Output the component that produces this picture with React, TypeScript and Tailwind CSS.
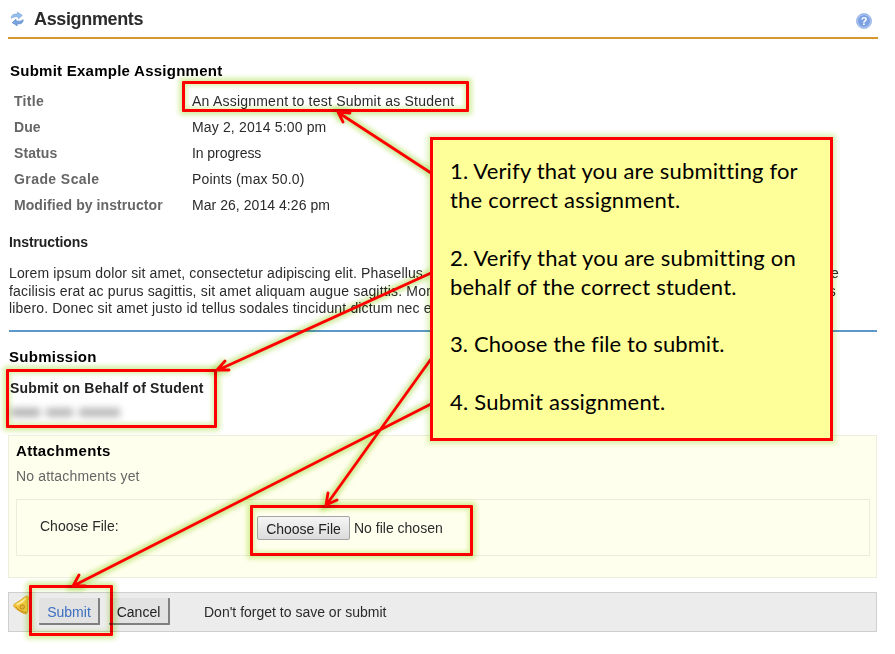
import type { ReactNode } from 'react';

const details: { label: string; value: string; labelClass: string; valueClass: string }[] = [
  { label: 'Title', value: 'An Assignment to test Submit as Student', labelClass: 'tracking-[0.3px]', valueClass: 'tracking-[0.22px]' },
  { label: 'Due', value: 'May 2, 2014 5:00 pm', labelClass: 'tracking-[0.1px]', valueClass: 'tracking-[0.15px]' },
  { label: 'Status', value: 'In progress', labelClass: 'tracking-[0.1px]', valueClass: 'tracking-[-0.07px]' },
  { label: 'Grade Scale', value: 'Points (max 50.0)', labelClass: 'tracking-[0.42px]', valueClass: 'tracking-[0.17px]' },
  { label: 'Modified by instructor', value: 'Mar 26, 2014 4:26 pm', labelClass: 'tracking-[0.08px]', valueClass: 'tracking-[0.05px]' },
];

function RefreshIcon() {
  return (
    <svg width="14" height="16" viewBox="0 0 14 16" className="shrink-0">
      <path d="M1.300 7.300C1.200 4 3.800 2.700 7.600 3.200L7.300 1.200 12.300 4.300 8.600 7.800 8.300 6C5.500 5.500 3.500 5.800 1.300 7.300z" fill="#93bfee" stroke="#6c9cd4" strokeWidth=".6" />
      <path d="M13.200 8.700c.1 3.300-2.500 4.600-6.300 4.100l.3 2L2.200 11.700 5.900 8.200 6.200 10c2.800.5 4.800.2 7-1.300z" fill="#78a5e0" stroke="#4f7fc2" strokeWidth=".6" />
    </svg>
  );
}

function HelpIcon() {
  return (
    <span className="flex h-[16px] w-[16px] items-center justify-center rounded-full border border-[#a3bdec] bg-[#7ba1e2] text-[11px] font-bold leading-none text-white shadow-[inset_0_0_0_1px_#b4c9f1]">
      ?
    </span>
  );
}

function BellIcon() {
  return (
    <svg width="18" height="20" viewBox="0 0 18 20" className="shrink-0">
      <path d="M.6 10.200C.8 8.800 5.500 6.900 8.500 4.500 10.500 2.900 12 1.700 13.600 1.300c1.400-.2 2.400.8 1.800 2.200-.9 2.300-.6 4.500-.5 7 .1 3.100.1 6.500-1.500 8.300-2.500.1-5.200-1.500-7.600-3.100C3.300 14 .5 11.800.6 10.200z" fill="#f5c93f" stroke="#d9a22c" strokeWidth="1" />
      <path d="M3.500 9.500c3.500-1 6.500-3.500 9-6" stroke="#fdeb9a" strokeWidth="1.800" fill="none" />
      <path d="M2.500 11.500c2.500 3 6.500 5.500 10.500 6" stroke="#c08a1c" strokeWidth="1" fill="none" />
      <circle cx="9.200" cy="12" r="2.200" fill="#eab838" stroke="#b07c14" strokeWidth=".8" />
    </svg>
  );
}

function Highlight({ className }: { className: string }) {
  return (
    <div
      className={
        'absolute rounded-[1px] border-3 border-[#ff0000] mix-blend-multiply shadow-[0_0_5px_3px_#d6efa3,inset_0_0_4px_2px_#dcf2b2] ' + className
      }
    />
  );
}

function Arrows() {
  const d =
    'M431 173L339 113M343 122L338 112L350 113M431 273L218 370M225 361L217 370L229 370M431 359L327 504M328 493L326 505L337 500M431 404L75 585M79 575L73 586L85 586';
  return (
    <>
      <svg className="absolute inset-0 mix-blend-multiply" width="895" height="654" viewBox="0 0 895 654" fill="none">
        <defs>
          <filter id="glow" x="0" y="0" width="895" height="654" filterUnits="userSpaceOnUse">
            <feGaussianBlur stdDeviation="2" />
          </filter>
        </defs>
        <path d={d} stroke="#b9e26c" strokeOpacity=".65" strokeWidth="9" filter="url(#glow)" />
      </svg>
      <svg className="absolute inset-0" width="895" height="654" viewBox="0 0 895 654" fill="none">
        <path d={d} stroke="#ff0000" strokeWidth="2.800" strokeLinecap="round" strokeLinejoin="round" />
      </svg>
    </>
  );
}

function Line({ children, className }: { children: ReactNode; className: string }) {
  return <p className={'whitespace-nowrap ' + className}>{children}</p>;
}

export default function App() {
  return (
    <div className="relative h-[654px] w-[895px] overflow-hidden bg-white font-['Liberation_Sans',Arial,sans-serif] text-[14px] text-[#2b2b2b]">
      <header className="mx-2 flex h-[39px] w-[870px] items-center border-b-2 border-[#d3972c] pl-[2px] pr-[6px]">
        <RefreshIcon />
        <h1 className="ml-[10px] mt-px text-[18px] font-bold tracking-[-0.35px]">Assignments</h1>
        <span className="ml-auto mt-[5px]">
          <HelpIcon />
        </span>
      </header>

      <main className="px-2">
        <h2 className="mt-[22px] pl-[2px] text-[15px] font-bold leading-[20px] tracking-[0.25px] text-black">Submit Example Assignment</h2>
        <dl className="mt-[7px]">
          {details.map((d) => (
            <div key={d.label} className="flex h-[26px] items-center whitespace-nowrap pl-[6px]">
              <dt className={'w-[178px] font-bold text-[#666] ' + d.labelClass}>{d.label}</dt>
              <dd className={d.valueClass}>{d.value}</dd>
            </div>
          ))}
        </dl>
        <h3 className="mt-[14px] pl-[1px] font-bold leading-[20px] tracking-[-0.1px] text-[#222]">Instructions</h3>
        <div className="mt-[13px] leading-[17.5px]">
          <Line className="flex w-[831px] justify-between pl-px tracking-[0.13px]">
            <span>Lorem ipsum dolor sit amet, consectetur adipiscing elit. Phasellus</span>
            <span>e</span>
          </Line>
          <Line className="flex w-[828px] justify-between pl-px tracking-[0.17px]">
            <span>facilisis erat ac purus sagittis, sit amet aliquam augue sagittis. Mor</span>
            <span>s</span>
          </Line>
          <Line className="pl-px tracking-[0.16px]">libero. Donec sit amet justo id tellus sodales tincidunt dictum nec e</Line>
        </div>
        <hr className="ml-px mt-[12px] w-[868px] border-t-2 border-[#5d98cb]" />

        <h2 className="mt-[15px] pl-[1px] text-[15px] font-bold leading-[20px] tracking-[0.27px] text-black">Submission</h2>
        <h3 className="mt-[11px] pl-[2px] font-bold leading-[20px] tracking-[0.2px] text-[#222]">Submit on Behalf of Student</h3>
        <div className="mt-[8px] flex h-[14px] items-center gap-[6px] pl-[3px] blur-[3.500px]">
          <span className="h-[9px] w-[29px] bg-[#b4b4b4]" />
          <span className="h-[9px] w-[27px] bg-[#bababa]" />
          <span className="h-[9px] w-[41px] bg-[#bababa]" />
        </div>

        <section className="mt-[15px] h-[143px] w-[869px] border border-[#eeeee0] bg-[#ffffee] pl-[7px] pt-[5px]">
          <h2 className="text-[15px] font-bold leading-[20px] tracking-[0.35px] text-black">Attachments</h2>
          <p className="mt-[5px] leading-[20px] tracking-[0.17px] text-[#666]">No attachments yet</p>
          <div className="mt-[13px] flex h-[57px] w-[854px] items-center border border-[#ededdd] pl-[23px]">
            <span className="mb-[2px] w-[217px]">Choose File:</span>
            <button className="mt-px h-[24px] w-[93px] whitespace-nowrap rounded-[2px] border border-[#a5a5a5] bg-linear-to-b from-[#f5f5f5] to-[#dcdcdc] pt-[2px] text-[#222]">Choose File</button>
            <span className="ml-[4px] mt-[3px]">No file chosen</span>
          </div>
        </section>

        <section className="mt-[14px] flex h-[40px] w-[869px] items-center border border-[#cfcfcf] bg-[#ececec] pl-[4px]">
          <span className="mb-[13px]">
            <BellIcon />
          </span>
          <button className="ml-[8px] h-[27px] w-[61px] rounded-[1px] border-r-2 border-b-2 border-[#808080] bg-[#e2e2e2] pl-[1px] pt-[3px] text-[#3b6fc0]">Submit</button>
          <button className="ml-[9px] h-[27px] w-[61px] rounded-[1px] border-r-2 border-b-2 border-[#808080] bg-[#e2e2e2] pt-[3px] text-[#222]">Cancel</button>
          <span className="ml-[34px] mt-[2px]">Don't forget to save or submit</span>
        </section>
      </main>

      <Highlight className="left-[182px] top-[81px] h-[31px] w-[287px]" />
      <Highlight className="left-[6px] top-[369px] h-[59px] w-[211px]" />
      <Highlight className="left-[250px] top-[505px] h-[51px] w-[223px]" />
      <Highlight className="left-[29px] top-[585px] h-[51px] w-[84px]" />
      <Arrows />
      <div className="absolute left-[430px] top-[137px] h-[304px] w-[403px] mix-blend-multiply shadow-[0_0_5px_3px_#ddf2b8]" />
      <aside className="absolute left-[430px] top-[137px] h-[304px] w-[403px] border-3 border-[#ff0000] bg-[#ffff99] pl-[17px] pt-[17.400px] font-[Lato,sans-serif] text-[22px] leading-[28.800px] tracking-[0.16px] text-black">
        <Line className="">1. Verify that you are submitting for</Line>
        <Line className="tracking-[0.22px]">the correct assignment.</Line>
        <Line className="mt-[28.800px] tracking-[0.2px]">2. Verify that you are submitting on</Line>
        <Line className="tracking-[0.2px]">behalf of the correct student.</Line>
        <Line className="mt-[28.800px] tracking-[0.1px]">3. Choose the file to submit.</Line>
        <Line className="mt-[28.800px] tracking-[0.22px]">4. Submit assignment.</Line>
      </aside>
    </div>
  );
}
